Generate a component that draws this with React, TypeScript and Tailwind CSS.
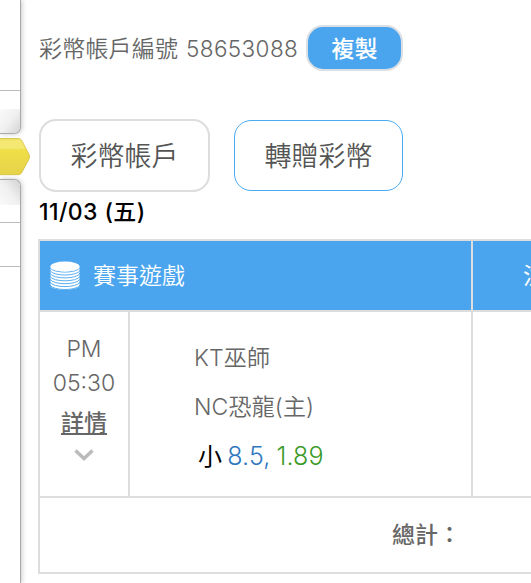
import React from "react";

const pick = { team: "KT巫師", opponent: "NC恐龍(主)", side: "小", line: "8.5", odds: "1.89" };

function CoinStack() {
  return (
    <svg className="w-[30px] h-[30px] shrink-0" viewBox="0 0 30 30" fill="none">
      <path d="M.5 5.500v19.500C3 30 27 30 29.500 25v-19.500z" fill="#fff" />
      {[0, 2.9, 5.8, 8.7, 11.6, 14.5, 17.4].map((y) => (
        <path
          key={y}
          d={`M0 ${6.6 + y}C3 ${12.6 + y} 27 ${12.6 + y} 30 ${6.6 + y}`}
          stroke="#4aa5ee"
          strokeWidth=".9"
        />
      ))}
      <ellipse cx="15" cy="5.5" rx="14.5" ry="5" fill="#fff" />
    </svg>
  );
}

function SideTabs() {
  return (
    <aside className="w-[30px] shrink-0 h-[583px] flex flex-col">
      <div className="w-[21px] h-[134px] shrink-0 border-r border-b border-[#aaa] rounded-br-[7px] shadow-[1px_0_5px_rgba(0,0,0,0.22)] bg-white overflow-hidden">
        <div className="h-[91px] border-b border-[#bbb]" />
        <div className="h-[18px]" />
        <div className="h-[25px] bg-linear-to-br from-[#fafafa] via-[#f0f0f0] to-[#d2d2d2]" />
      </div>
      <svg className="w-[30px] h-[45px] shrink-0" viewBox="0 0 30 45">
        <defs>
          <linearGradient id="tab" x1="0" y1="0" x2="0" y2="1">
            <stop offset="0" stopColor="#e9dc5e" />
            <stop offset="0.07" stopColor="#f4e873" />
            <stop offset="0.26" stopColor="#f5e974" />
            <stop offset="0.31" stopColor="#f0df48" />
            <stop offset="1" stopColor="#e6d24a" />
          </linearGradient>
        </defs>
        <path
          d="M-1 4.500H18.500Q20.500 4.500 21.500 6L28.800 20Q30.300 22.800 28.800 25.500L21.500 39Q20.500 40.700 18.500 40.700H-1z"
          fill="url(#tab)"
          stroke="#d3be3c"
          strokeWidth=".8"
        />
      </svg>
      <div className="w-[21px] flex-1 border-r border-t border-[#aaa] rounded-tr-[7px] shadow-[1px_0_5px_rgba(0,0,0,0.22)] bg-white overflow-hidden">
        <div className="h-[25px] bg-linear-to-tr from-[#fafafa] via-[#f0f0f0] to-[#d2d2d2]" />
        <div className="h-[18px] border-b border-[#bbb]" />
        <div className="h-[44px] border-b border-[#bbb]" />
      </div>
    </aside>
  );
}

export default function App() {
  return (
    <div className="w-[531px] h-[583px] overflow-hidden bg-white flex font-['Inter','Noto_Sans_CJK_TC',sans-serif] text-[#666] whitespace-nowrap">
      <SideTabs />
      <main className="w-[501px] shrink-0 pl-2 pt-[25px]">
        <div className="flex items-center h-[46px] pl-px text-[23px] font-[350]">
          <span className="w-[147px] pt-0.5 tracking-[0.2px]">彩幣帳戶編號</span>
          <span className="w-[120px] pt-0.5 text-[22.5px] tracking-[0.4px]">58653088</span>
          <button className="w-[97px] h-[46px] rounded-[17px] border-2 border-[#dcdfe3] bg-[#4aa5ee] text-white font-medium pt-0.5">
            複製
          </button>
        </div>

        <div className="mt-12 pl-px flex items-center gap-6 text-[27px] font-[350] text-[#555]">
          <button className="w-[171px] h-[73px] pt-1 rounded-[17px] border-2 border-[#ddd]">彩幣帳戶</button>
          <button className="w-[169px] h-[71px] pt-1 rounded-[17px] border border-[#4aaaf0]">轉贈彩幣</button>
        </div>

        <div className="h-[47px] pl-px text-[23px] leading-[40px] tracking-[0.4px] font-medium text-black">11/03 (五)</div>

        <div className="w-[620px] grid grid-cols-[88px_341px_185px] grid-rows-[69px_184px_74px] gap-0.5 p-0.5 bg-[#ddd]">
          <div className="col-span-2 bg-[#4aa5ee] flex items-center pl-2.5 text-[23px] font-[350] text-white">
            <CoinStack />
            <span className="ml-[13px] pt-0.5">賽事遊戲</span>
          </div>
          <div className="bg-[#4aa5ee] flex items-center pl-[50px] pt-0.5 text-[23px] text-white">注額</div>

          <div className="bg-white flex flex-col items-center pt-5 text-[23px] leading-[34px] font-light">
            <span>PM</span>
            <span>05:30</span>
            <a href="#" className="mt-1.5 font-medium underline underline-offset-2 decoration-2">詳情</a>
            <svg className="mt-[9px] w-5 h-3" viewBox="0 0 20 12" fill="none" stroke="#bbb" strokeWidth="3.5">
              <path d="M1.500 1.500 10 9.500 18.500 1.500" />
            </svg>
          </div>
          <div className="bg-white pl-16 pt-[22px] text-[23px] leading-[49px] font-[350] tracking-[0.15px]">
            <div>{pick.team}</div>
            <div>{pick.opponent}</div>
            <div className="pl-1 text-[24px]">
              <span className="text-black font-normal">{pick.side}</span>
              <span className="ml-[5px] text-[25px] text-[#2f78c0]">{pick.line},</span>
              <span className="ml-[6px] text-[25px] text-[#3b9a28]">{pick.odds}</span>
            </div>
          </div>
          <div className="bg-white" />

          <div className="col-span-3 bg-white pl-[352px] text-[23px] leading-[74px] font-medium">總計：</div>
        </div>
      </main>
    </div>
  );
}
